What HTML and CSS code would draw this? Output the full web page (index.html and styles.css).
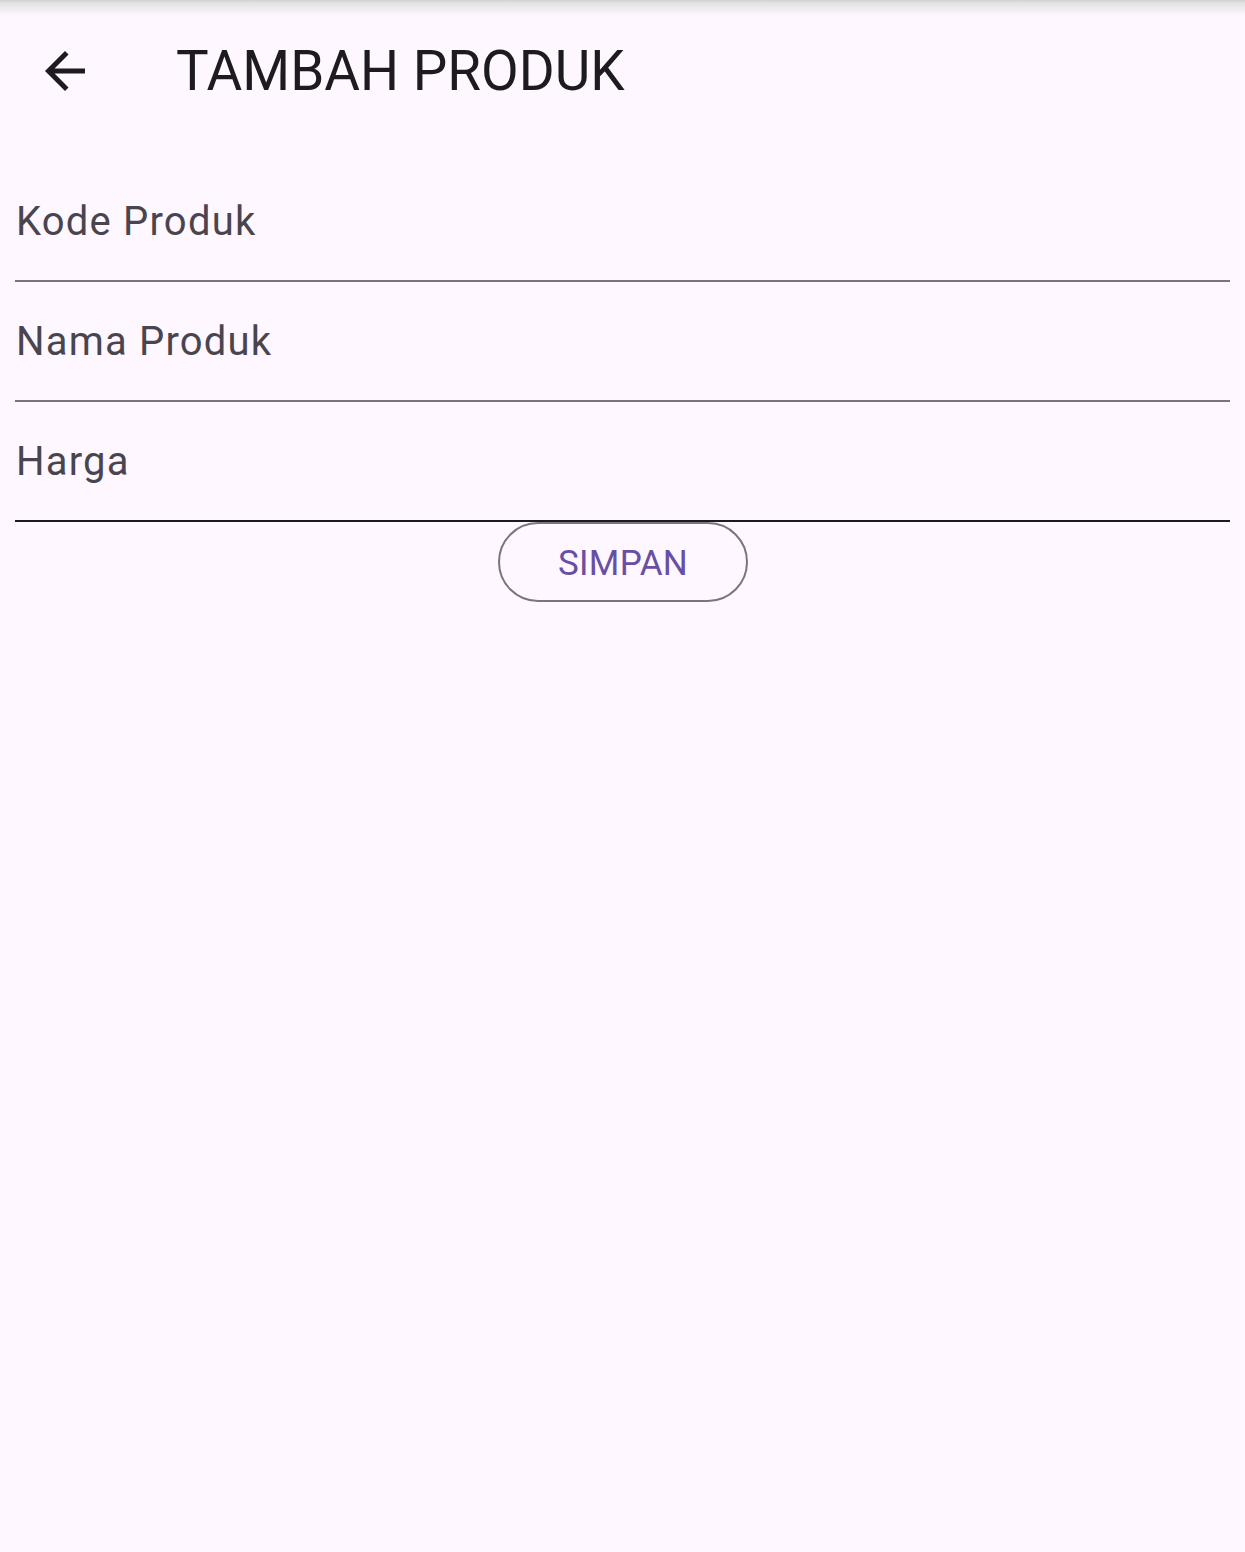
FILE: index.html
```html
<!DOCTYPE html>
<html lang="id">
<head>
<meta charset="utf-8">
<title>Tambah Produk</title>
<link rel="stylesheet" href="styles.css">
</head>
<body>
<div class="top-shadow"></div>
<header class="appbar">
  <button class="back" aria-label="Kembali">
    <svg width="60" height="60" viewBox="0 0 24 24"><path d="M20 11H7.83l5.59-5.59L12 4l-8 8 8 8 1.41-1.41L7.83 13H20v-2z" fill="#1D1B20"/></svg>
  </button>
  <h1 class="title">TAMBAH PRODUK</h1>
</header>
<form class="form">
  <label class="field"><span class="label">Kode Produk</span></label>
  <label class="field"><span class="label">Nama Produk</span></label>
  <label class="field focused"><span class="label">Harga</span></label>
  <div class="actions">
    <button type="button" class="btn">SIMPAN</button>
  </div>
</form>
</body>
</html>
```

FILE: styles.css
```css
html, body {
  margin: 0;
  padding: 0;
  background: #FEF7FF;
  font-family: Roboto, "Liberation Sans", sans-serif;
  height: 100%;
}
.top-shadow {
  position: absolute;
  left: 0;
  top: 0;
  right: 0;
  height: 16px;
  background: linear-gradient(#d2d0d3 0, #e4e2e5 20%, #FEF7FF 100%);
}
.appbar {
  display: flex;
  align-items: center;
  height: 142px;
}
.back {
  border: 0;
  background: none;
  padding: 0;
  margin-left: 35px;
  width: 60px;
  height: 60px;
  display: flex;
}
.title {
  margin: 0 0 0 81px;
  font-weight: 400;
  font-size: 54.8px;
  color: #1D1B20;
  line-height: 66px;
}
.form {
  padding: 20px 15px 0;
  display: flex;
  flex-direction: column;
}
.field {
  display: block;
  box-sizing: border-box;
  height: 120px;
  padding: 36px 0 0 1px;
  border-bottom: 2px solid #79747E;
}
.field.focused {
  border-bottom-color: #1D1B20;
}
.label {
  display: block;
  font-size: 40px;
  line-height: 48px;
  color: #49454F;
  letter-spacing: 1.2px;
}
.actions {
  display: flex;
  justify-content: center;
}
.btn {
  box-sizing: border-box;
  width: 250px;
  height: 80px;
  border: 2px solid #79747E;
  border-radius: 40px;
  background: transparent;
  color: #6750A4;
  font-family: Roboto, "Liberation Sans", sans-serif;
  font-size: 35px;
  letter-spacing: 0.3px;
  padding: 2px 0 0 1px;
  line-height: 76px;
}
```
